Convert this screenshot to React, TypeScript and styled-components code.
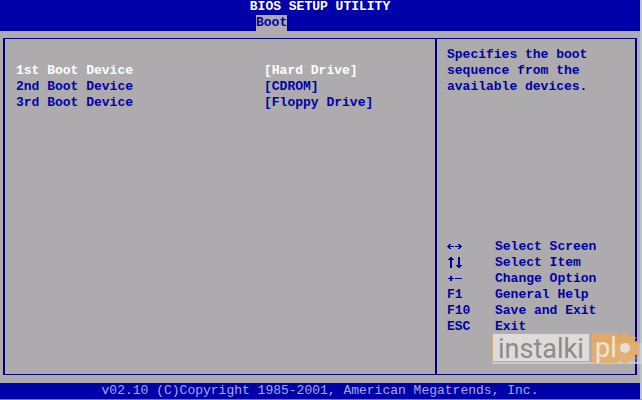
import React from "react";
import styled, { createGlobalStyle } from "styled-components";

const blue = "#0000a8";
const line = "#00007c";
const gray = "#adabad";

const GlobalStyle = createGlobalStyle`
  * { box-sizing: border-box; }
  html, body, #root { height: 100%; }
  body {
    margin: 0;
    background: ${gray};
    font: bold 13px/16px "Liberation Mono", monospace;
    color: ${blue};
    overflow: hidden;
  }
`;

const Screen = styled.div`
  position: relative;
  display: flex;
  flex-direction: column;
  min-height: 100vh;
  border-right: 2px solid #b9c4cc;
  border-bottom: 1px solid #6c7cae;
`;

const Header = styled.header`
  display: flex;
  flex-direction: column;
  height: 31px;
  justify-content: flex-end;
  background: ${blue};
`;

const Title = styled.h1`
  margin: 0;
  font: inherit;
  color: #fff;
  text-align: center;
`;

const Tabs = styled.nav`
  display: flex;
  padding-left: 40%;
`;

const Tab = styled.button`
  border: 0;
  padding: 0;
  font: inherit;
  background: ${gray};
  color: ${blue};
`;

const Body = styled.main`
  flex: 1;
  display: grid;
  grid-template-columns: minmax(0, 1fr) 200px;
  margin: 7px 3px 8px;
  border: solid ${line};
  border-width: 1px 2px;
`;

const Settings = styled.section`
  padding: 24px 11px;
`;

const Setting = styled.div<{ $selected?: boolean }>`
  display: grid;
  grid-template-columns: 248px 1fr;
  color: ${(p) => (p.$selected ? "#fff" : blue)};
`;

const Value = styled.button`
  justify-self: start;
  border: 0;
  padding: 0;
  background: none;
  font: inherit;
  color: inherit;
`;

const Side = styled.aside`
  display: flex;
  flex-direction: column;
  justify-content: space-between;
  padding: 8px 10px 39px;
  border-left: 2px solid ${line};
`;

const Help = styled.p`
  margin: 0;
  max-width: 168px;
`;

const Keys = styled.dl`
  display: grid;
  grid-template-columns: 48px 1fr;
  margin: 0;

  dt, dd { margin: 0; }
`;

const Arrows = styled.svg`
  display: block;
  width: 16px;
  height: 16px;
  fill: currentColor;
  shape-rendering: crispEdges;
`;

const Footer = styled.footer`
  background: ${blue};
  color: #a9a9ee;
  font-weight: normal;
  text-align: center;
`;

const Watermark = styled.svg`
  position: absolute;
  right: -2px;
  bottom: 35px;
  width: 150px;
  height: 32px;
  pointer-events: none;
`;

const WatermarkText = styled.text`
  font: 400 27px Roboto, sans-serif;
`;

const WatermarkSuffix = styled.text`
  font: 400 27px Roboto, sans-serif;
`;

const devices = [
  ["1st Boot Device", "Hard Drive"],
  ["2nd Boot Device", "CDROM"],
  ["3rd Boot Device", "Floppy Drive"],
];

const LeftRight = () => (
  <Arrows viewBox="0 0 16 16" role="img" aria-label="Left and right arrows">
    <path d="M0 7h1v-1h1v-1h2v1h-1v1h4v1h-4v1h1v1h-2v-1h-1v-1h-1z" />
    <path d="M15 7h-1v-1h-1v-1h-2v1h1v1h-4v1h4v1h-1v1h2v-1h1v-1h1z" />
  </Arrows>
);

const UpDown = () => (
  <Arrows viewBox="0 0 16 16" role="img" aria-label="Up and down arrows">
    <path d="M3 2h2v1h1v1h1v1h-2v8h-2v-8h-2v-1h1v-1h1z" />
    <path d="M11 2h2v8h2v1h-1v1h-1v1h-2v-1h-1v-1h-1v-1h2z" />
  </Arrows>
);

const PlusMinus = () => (
  <Arrows viewBox="0 0 16 16" role="img" aria-label="Plus and minus">
    <path d="M3 5h2v2h2v1h-2v2h-2v-2h-2v-1h2zM8 7h7v1h-7z" />
  </Arrows>
);

const keys: { id: string; label: React.ReactNode; action: string }[] = [
  { id: "screen", label: <LeftRight />, action: "Select Screen" },
  { id: "item", label: <UpDown />, action: "Select Item" },
  { id: "option", label: <PlusMinus />, action: "Change Option" },
  { id: "help", label: "F1", action: "General Help" },
  { id: "save", label: "F10", action: "Save and Exit" },
  { id: "exit", label: "ESC", action: "Exit" },
];

const teeth = Array.from({ length: 10 }, (_, i) => i * 36);

const Logo = () => (
  <Watermark viewBox="0 0 150 32" role="img" aria-label="instalki.pl">
    <rect x="126" y="11" width="24" height="20" fill="#fff" opacity="0.2" />
    <rect x="0" y="30" width="150" height="2" fill="#d6d3d0" opacity="0.7" />
    <rect x="0.5" y="1.5" width="97" height="28" fill="#dedbda" stroke="#d3a979" />
    <WatermarkText x="6" y="26" fill="#8c8a8c">instalki</WatermarkText>
    <g fill="#e3a964" opacity="0.95">
      <path d="M100 1h25v5h-2v20h2v5h-25z" />
      <circle cx="133" cy="16" r="12" />
      {teeth.map((angle) => (
        <rect key={angle} x="130" y="1" width="6" height="6" transform={`rotate(${angle} 133 16)`} />
      ))}
    </g>
    <WatermarkSuffix x="103" y="25" fill="#f0e2d0">pl</WatermarkSuffix>
    <circle cx="133" cy="16" r="5" fill="#e4ddd4" />
    <rect x="100" y="11" width="50" height="20" fill="#fff" opacity="0.08" />
  </Watermark>
);

export default function App() {
  return (
    <Screen>
      <GlobalStyle />
      <Header>
        <Title>BIOS SETUP UTILITY</Title>
        <Tabs><Tab>Boot</Tab></Tabs>
      </Header>
      <Body>
        <Settings>
          {devices.map(([name, value], i) => (
            <Setting key={name} $selected={i === 0}>
              <span id={`device-${i}`}>{name}</span>
              <Value aria-describedby={`device-${i}`}>[{value}]</Value>
            </Setting>
          ))}
        </Settings>
        <Side>
          <Help>Specifies the boot sequence from the available devices.</Help>
          <Keys>
            {keys.map(({ id, label, action }) => (
              <React.Fragment key={id}>
                <dt>{label}</dt>
                <dd>{action}</dd>
              </React.Fragment>
            ))}
          </Keys>
        </Side>
      </Body>
      <Footer>v02.10 (C)Copyright 1985-2001, American Megatrends, Inc.</Footer>
      <Logo />
    </Screen>
  );
}
